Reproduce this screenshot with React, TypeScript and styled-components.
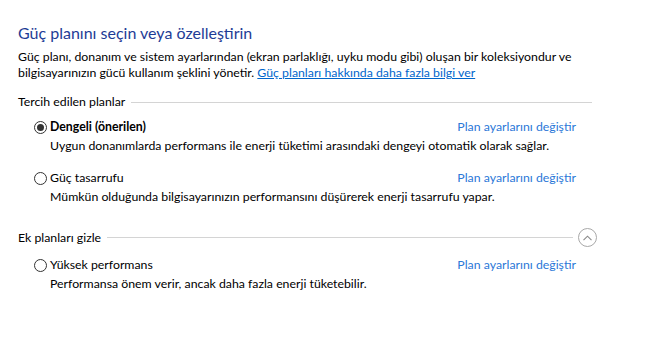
import React from 'react';
import styled, { createGlobalStyle } from 'styled-components';

const GlobalStyle = createGlobalStyle`
  body {
    margin: 0;
    background: #ffffff;
    font-family: Lato, 'Noto Sans', sans-serif;
    color: #000000;
  }
`;

const Page = styled.div`
  width: 579px;
  padding: 23px 0 0 18px;
  font-size: 12.3px;
  line-height: 16px;
`;

const Title = styled.h1`
  margin: 0;
  font-size: 16px;
  line-height: 20px;
  font-weight: 400;
  color: #1e3c96;
`;

const Intro = styled.p`
  margin: 6px 0 0;
  white-space: nowrap;
`;

const InfoLink = styled.a`
  color: #0066cc;
  text-decoration: underline;
`;

const SectionHeader = styled.div<{ $top: number; $lineEnd: number }>`
  display: flex;
  align-items: center;
  gap: 6px;
  min-height: 18px;
  margin-top: ${(p) => p.$top}px;
  padding-right: ${(p) => p.$lineEnd}px;
`;

const SectionLine = styled.div`
  flex: 1;
  height: 1px;
  background: #d4d4d4;
`;

const CollapseButton = styled.button`
  width: 19px;
  height: 19px;
  padding: 0;
  margin-left: -1px;
  border: 1px solid #a8a8a8;
  border-radius: 50%;
  background: #ffffff;
  display: flex;
  align-items: center;
  justify-content: center;
`;

const PlanBlock = styled.div<{ $top: number }>`
  margin-top: ${(p) => p.$top}px;
  padding: 0 21px 0 16px;
  white-space: nowrap;
`;

const PlanRow = styled.div`
  display: flex;
  align-items: center;
`;

const Radio = styled.span<{ $checked?: boolean }>`
  width: 13px;
  height: 13px;
  box-sizing: border-box;
  border: 1px solid #333333;
  border-radius: 50%;
  margin-right: 3px;
  display: flex;
  align-items: center;
  justify-content: center;
  &::after {
    content: '';
    width: 7px;
    height: 7px;
    border-radius: 50%;
    background: ${(p) => (p.$checked ? '#333333' : 'transparent')};
  }
`;

const PlanName = styled.span<{ $active?: boolean }>`
  flex: 1;
  font-weight: ${(p) => (p.$active ? 700 : 400)};
`;

const PlanLink = styled.a`
  color: #2b78d8;
  text-decoration: none;
`;

const PlanDesc = styled.p`
  margin: 3px 0 0 16px;
`;

interface IPlan {
  name: string;
  desc: string;
  checked?: boolean;
}

const Plan: React.FC<IPlan & { top: number }> = ({ name, desc, checked, top }) => (
  <PlanBlock $top={top}>
    <PlanRow>
      <Radio $checked={checked} />
      <PlanName $active={checked}>{name}</PlanName>
      <PlanLink>Plan ayarlarını değiştir</PlanLink>
    </PlanRow>
    <PlanDesc>{desc}</PlanDesc>
  </PlanBlock>
);

export default function App() {
  return (
    <>
      <GlobalStyle />
      <Page>
        <Title>Güç planını seçin veya özelleştirin</Title>
        <Intro>
          Güç planı, donanım ve sistem ayarlarından (ekran parlaklığı, uyku modu gibi) oluşan bir koleksiyondur ve
          <br />
          bilgisayarınızın gücü kullanım şeklini yönetir. <InfoLink>Güç planları hakkında daha fazla bilgi ver</InfoLink>
        </Intro>

        <SectionHeader $top={12} $lineEnd={5}>
          <span>Tercih edilen planlar</span>
          <SectionLine />
        </SectionHeader>
        <Plan
          top={8}
          checked
          name="Dengeli (önerilen)"
          desc="Uygun donanımlarda performans ile enerji tüketimi arasındaki dengeyi otomatik olarak sağlar."
        />
        <Plan
          top={16}
          name="Güç tasarrufu"
          desc="Mümkün olduğunda bilgisayarınızın performansını düşürerek enerji tasarrufu yapar."
        />

        <SectionHeader $top={23} $lineEnd={0}>
          <span>Ek planları gizle</span>
          <SectionLine />
          <CollapseButton>
            <svg width="9" height="6" viewBox="0 0 9 6">
              <path d="M0.5 5.2 L4.5 1.2 L8.5 5.2" fill="none" stroke="#8a8a8a" strokeWidth="1.1" />
            </svg>
          </CollapseButton>
        </SectionHeader>
        <Plan
          top={10}
          name="Yüksek performans"
          desc="Performansa önem verir, ancak daha fazla enerji tüketebilir."
        />
      </Page>
    </>
  );
}
